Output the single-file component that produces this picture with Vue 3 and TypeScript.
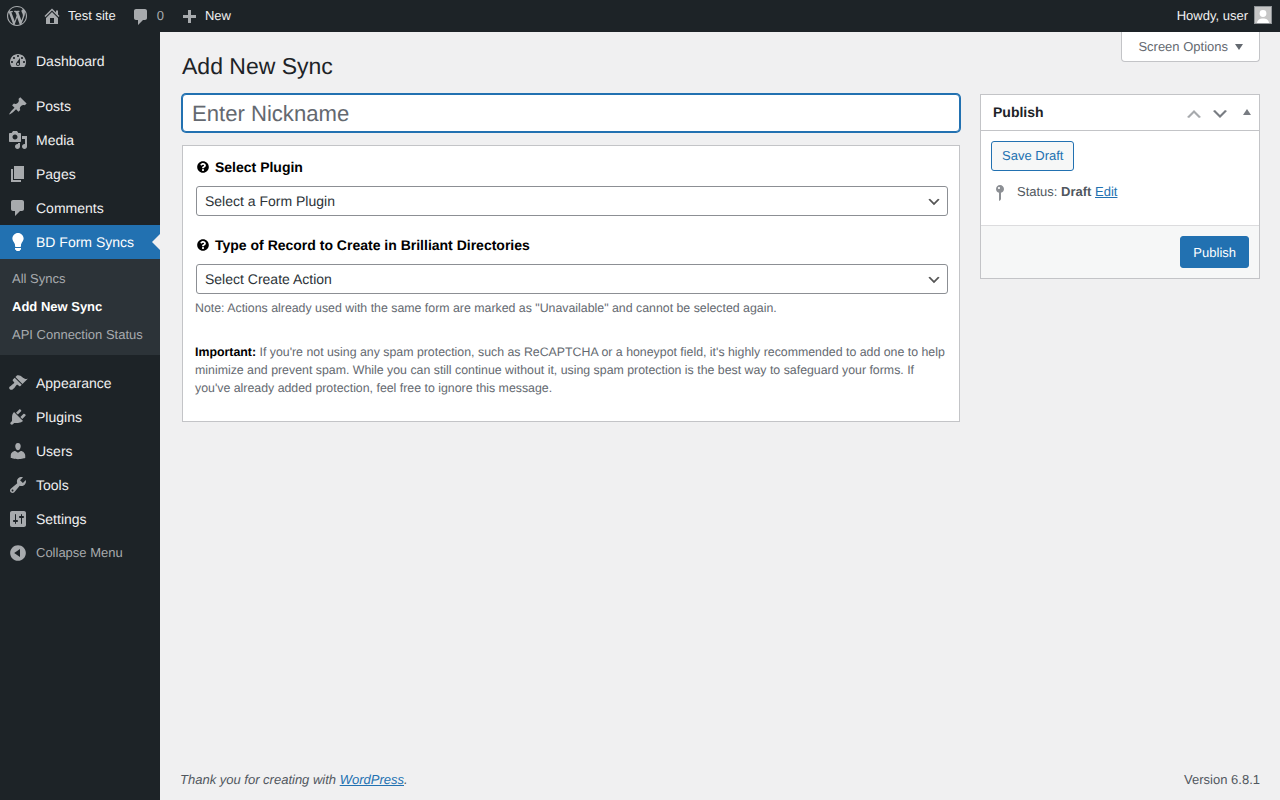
<template>
  <div class="shell">
    <header class="adminbar">
      <div class="bar-left">
        <svg class="wp-logo" viewBox="0 0 20 20"><path :d="icons.wp" /></svg>
        <a class="bar-item site"><svg viewBox="0 0 20 20"><path :d="icons.home" /></svg>Test site</a>
        <a class="bar-item comments"><svg viewBox="0 0 20 20"><path :d="icons.comments" /></svg><span>0</span></a>
        <a class="bar-item new"><svg viewBox="0 0 20 20"><path :d="icons.plus" /></svg>New</a>
      </div>
      <div class="howdy">
        Howdy, user
        <svg class="avatar" viewBox="0 0 18 18">
          <rect width="18" height="18" fill="#8f9396" />
          <rect x="1" y="1" width="16" height="16" fill="#c6c6c6" />
          <circle cx="9" cy="7.500" r="3.400" fill="#fff" />
          <path d="M3 17c.3-3.200 2.800-4.500 6-4.500s5.700 1.300 6 4.500z" fill="#fff" />
        </svg>
      </div>
    </header>

    <aside class="sidebar">
      <template v-for="group in menu" :key="group[0].label">
        <ul class="menu-group">
          <li v-for="item in group" :key="item.label">
            <a class="menu-item" :class="{ active: item.active }">
              <svg viewBox="0 0 20 20"><path :d="item.icon" /></svg>
              {{ item.label }}
            </a>
            <ul v-if="item.active" class="submenu">
              <li v-for="sub in submenu" :key="sub" :class="{ current: sub === 'Add New Sync' }">{{ sub }}</li>
            </ul>
          </li>
        </ul>
      </template>
      <a class="collapse"><svg viewBox="0 0 20 20"><path :d="icons.collapse" /></svg>Collapse Menu</a>
    </aside>

    <main class="content">
      <div class="head">
        <h1>Add New Sync</h1>
        <button class="screen-options">Screen Options <i class="caret"></i></button>
      </div>

      <div class="columns">
        <section class="main-col">
          <input class="nickname" type="text" placeholder="Enter Nickname" />
          <div class="box">
            <label class="field-label"><svg viewBox="0 0 512 512"><path :d="icons.help" /></svg>Select Plugin</label>
            <select class="field"><option>Select a Form Plugin</option></select>

            <label class="field-label second"><svg viewBox="0 0 512 512"><path :d="icons.help" /></svg>Type of Record to Create in Brilliant Directories</label>
            <select class="field"><option>Select Create Action</option></select>

            <p class="note">Note: Actions already used with the same form are marked as "Unavailable" and cannot be selected again.</p>
            <p class="important"><strong>Important:</strong> If you're not using any spam protection, such as ReCAPTCHA or a honeypot field, it's highly recommended to add one to help minimize and prevent spam. While you can still continue without it, using spam protection is the best way to safeguard your forms. If you've already added protection, feel free to ignore this message.</p>
          </div>
        </section>

        <section class="publish">
          <div class="publish-head">
            <h2>Publish</h2>
            <svg class="chev up" viewBox="0 0 20 20"><path d="M15 14l-5-5-5 5-2-1 7-7 7 7z" /></svg>
            <svg class="chev down" viewBox="0 0 20 20"><path d="M5 6l5 5 5-5 2 1-7 7-7-7z" /></svg>
            <i class="toggle"></i>
          </div>
          <div class="publish-body">
            <button class="save-draft">Save Draft</button>
            <div class="status">
              <svg viewBox="0 0 20 20"><path :d="icons.status" /></svg>
              <span>Status: <b>Draft</b> <a>Edit</a></span>
            </div>
          </div>
          <div class="publish-foot">
            <button class="publish-btn">Publish</button>
          </div>
        </section>
      </div>

      <footer class="footer">
        <em>Thank you for creating with <a>WordPress</a>.</em>
        <span>Version 6.8.1</span>
      </footer>
    </main>
  </div>
</template>

<script setup lang="ts">
interface MenuItem { label: string; icon: string; active?: boolean }

const icons = {
  wp: 'M20 10c0-5.510-4.490-10-10-10C4.480 0 0 4.490 0 10c0 5.520 4.480 10 10 10 5.510 0 10-4.480 10-10zM7.780 15.370L4.370 6.220c.55-.02 1.170-.08 1.170-.08.5-.06.44-1.130-.06-1.110 0 0-1.450.11-2.370.11-.18 0-.37 0-.58-.01C4.120 2.690 6.870 1.110 10 1.110c2.330 0 4.450.87 6.050 2.340-.68-.11-1.650.39-1.650 1.580 0 .74.45 1.360.9 2.100.35.61.55 1.360.55 2.460 0 1.490-1.400 5-1.400 5l-3.030-8.370c.54-.02.82-.17.82-.17.5-.05.44-1.250-.06-1.220 0 0-1.440.12-2.380.12-.87 0-2.330-.12-2.330-.12-.5-.03-.56 1.200-.06 1.220l.92.08 1.260 3.410zM17.410 10c.24-.64.74-1.870.43-4.250.7 1.290 1.050 2.710 1.050 4.250 0 3.290-1.730 6.240-4.400 7.780.97-2.590 1.940-5.200 2.920-7.780zM6.100 18.090C3.120 16.650 1.110 13.530 1.110 10c0-1.300.23-2.480.72-3.590C3.250 10.300 4.670 14.200 6.100 18.090zm4.030-6.630l2.580 6.980c-.86.29-1.760.45-2.710.45-.79 0-1.570-.11-2.290-.33.81-2.380 1.620-4.740 2.420-7.100z',
  home: 'M16 8.500l1.530 1.530-1.060 1.060L10 4.620l-6.470 6.470-1.060-1.060L10 2.500l4 4v-2h2v4zm-6-2.460l6 5.990V18H4v-5.970zM12 17v-5H8v5h4z',
  comments: 'M5 2h9c1.100 0 2 .9 2 2v7c0 1.100-.9 2-2 2h-2l-5 5v-5H5c-1.100 0-2-.9-2-2V4c0-1.100.9-2 2-2z',
  plus: 'M17 7v3h-5v5H9v-5H4V7h5V2h3v5h5z',
  collapse: 'M10 2.160c4.330 0 7.840 3.510 7.840 7.840s-3.510 7.840-7.840 7.840S2.160 14.330 2.160 10 5.710 2.160 10 2.160zm2 11.720V6.120L6.180 9.970z',
  status: 'M14 6c0 1.860-1.280 3.410-3 3.860V16c0 1-2 2-2 2V9.860c-1.720-.45-3-2-3-3.860 0-2.210 1.790-4 4-4s4 1.790 4 4zM8 5c0 .55.45 1 1 1s1-.45 1-1-.45-1-1-1-1 .45-1 1z',
  help: 'M504 256c0 136.997-111.043 248-248 248S8 392.997 8 256C8 119.083 119.043 8 256 8s248 111.083 248 248zM262.655 90c-54.497 0-89.255 22.957-116.549 63.758-3.536 5.286-2.353 12.415 2.715 16.258l34.699 26.310c5.205 3.947 12.621 3.008 16.665-2.122 17.864-22.658 30.113-35.797 57.303-35.797 20.429 0 45.698 13.148 45.698 32.958 0 14.976-12.363 22.667-32.534 33.976C247.128 238.528 216 254.941 216 296v4c0 6.627 5.373 12 12 12h56c6.627 0 12-5.373 12-12v-1.333c0-28.462 83.186-29.647 83.186-106.667 0-58.002-60.165-102-116.531-102zM256 338c-25.365 0-46 20.635-46 46 0 25.364 20.635 46 46 46s46-20.636 46-46c0-25.365-20.635-46-46-46z',
}

const menu: MenuItem[][] = [
  [{ label: 'Dashboard', icon: 'M3.760 16h12.480c1.100-1.370 1.760-3.110 1.760-5 0-4.420-3.580-8-8-8s-8 3.580-8 8c0 1.890.66 3.630 1.760 5zM10 4c.55 0 1 .45 1 1s-.45 1-1 1-1-.45-1-1 .45-1 1-1zM6 6c.55 0 1 .45 1 1s-.45 1-1 1-1-.45-1-1 .45-1 1-1zm8 0c.55 0 1 .45 1 1s-.45 1-1 1-1-.45-1-1 .45-1 1-1zm-5.370 5.550L12 7v6c0 1.100-.9 2-2 2s-2-.9-2-2c0-.57.24-1.080.63-1.450zM4 10c.55 0 1 .45 1 1s-.45 1-1 1-1-.45-1-1 .45-1 1-1zm12 0c.55 0 1 .45 1 1s-.45 1-1 1-1-.45-1-1 .45-1 1-1zm-5 3c0-.55-.45-1-1-1s-1 .45-1 1 .45 1 1 1 1-.45 1-1z' }],
  [
    { label: 'Posts', icon: 'M10.440 3.020l1.820-1.820 6.360 6.350-1.830 1.820c-1.050-.68-2.480-.57-3.410.36l-.75.75c-.92.93-1.040 2.350-.35 3.410l-1.830 1.820-2.410-2.410-2.800 2.790c-.42.42-3.380 2.710-3.800 2.290s1.860-3.390 2.280-3.810l2.790-2.790L4.100 9.360l1.830-1.820c1.050.69 2.480.57 3.400-.36l.75-.75c.93-.92 1.050-2.350.36-3.410z' },
    { label: 'Media', icon: 'M13 11V4c0-.55-.45-1-1-1h-1.670L9 1H5L3.670 3H2c-.55 0-1 .45-1 1v7c0 .55.45 1 1 1h10c.55 0 1-.45 1-1zM7 4.500c1.380 0 2.500 1.120 2.500 2.500S8.380 9.500 7 9.500 4.500 8.380 4.500 7 5.620 4.500 7 4.500zM14 6h5v10.500c0 1.380-1.120 2.500-2.500 2.500S14 17.880 14 16.500s1.120-2.500 2.500-2.500c.17 0 .34.02.5.05V9h-3V6zm-4 8.050V13h2v3.500c0 1.380-1.120 2.500-2.500 2.500S7 17.880 7 16.500 8.120 14 9.500 14c.17 0 .34.02.5.05z' },
    { label: 'Pages', icon: 'M6 15V2h10v13H6zm-1 1h8v2H3V5h2v11z' },
    { label: 'Comments', icon: icons.comments },
    { label: 'BD Form Syncs', active: true, icon: 'M10 1c3.110 0 5.630 2.520 5.630 5.620 0 1.840-2.030 4.580-2.030 4.580-.33.44-.6 1.250-.6 1.800v1c0 .55-.45 1-1 1H8c-.55 0-1-.45-1-1v-1c0-.55-.27-1.360-.6-1.800 0 0-2.020-2.740-2.020-4.580C4.380 3.520 6.890 1 10 1zM7 16.870V16h6v.87c0 .62-.13 1.130-.75 1.130H12c0 .62-.4 1-1.020 1h-2c-.61 0-.98-.38-.98-1h-.25c-.62 0-.75-.51-.75-1.130z' },
  ],
  [
    { label: 'Appearance', icon: 'M14.480 11.060L7.410 3.990l1.500-1.500c.5-.56 2.300-.47 3.510.32 1.210.8 1.430 1.280 2.910 2.100 1.180.64 2.450 1.260 4.450.85zm-.71.71L6.700 4.700 4.930 6.470c-.39.39-.39 1.020 0 1.410l1.060 1.060c.39.39.39 1.030 0 1.420-.6.6-1.430 1.110-2.210 1.690-.35.26-.7.53-1.010.84C1.430 13.230.4 14.750 1.800 16.150c1.410 1.410 2.920.38 4.250-.95.31-.31.58-.66.84-1.010.58-.78 1.090-1.610 1.690-2.210.39-.39 1.020-.39 1.410 0l1.060 1.060c.39.39 1.020.39 1.410 0z' },
    { label: 'Plugins', icon: 'M13.110 4.360L9.870 7.600 8 5.730l3.240-3.240c.35-.34 1.050-.2 1.560.32.52.51.66 1.210.31 1.550zm-8 1.770l.91-1.120 9.010 9.010-1.190.84c-.71.71-2.630 1.160-3.820 1.160H6.140L4.900 17.260c-.59.59-1.540.59-2.120 0-.59-.58-.59-1.530 0-2.120l1.240-1.240v-3.880c0-1.130.4-3.190 1.090-3.890zm7.260 3.970l3.240-3.240c.34-.35 1.040-.21 1.550.31.52.51.66 1.210.31 1.550l-3.240 3.250z' },
    { label: 'Users', icon: 'M10 9.250c-2.270 0-2.730-3.440-2.730-3.440C7 4.020 7.820 2 9.970 2c2.160 0 2.980 2.020 2.710 3.810 0 0-.41 3.440-2.680 3.440zm0 2.570L12.720 10c2.390 0 4.520 2.330 4.520 4.530v2.490s-3.650 1.130-7.240 1.130c-3.650 0-7.240-1.130-7.240-1.130v-2.490c0-2.250 1.940-4.480 4.470-4.480z' },
    { label: 'Tools', icon: 'M16.680 9.770c-1.340 1.340-3.300 1.670-4.950.99l-5.410 6.520c-.99.99-2.590.99-3.580 0s-.99-2.590 0-3.570l6.520-5.420c-.68-1.650-.35-3.610.99-4.950 1.280-1.280 3.120-1.620 4.720-1.060l-2.890 2.890 2.820 2.820 2.860-2.870c.53 1.580.18 3.390-1.080 4.670zM3.810 16.210c.4.39 1.040.39 1.430 0 .4-.4.4-1.040 0-1.430-.39-.4-1.030-.4-1.430 0-.39.39-.39 1.030 0 1.430z' },
    { label: 'Settings', icon: 'M18 16V4c0-1.100-.9-2-2-2H4c-1.100 0-2 .9-2 2v12c0 1.100.9 2 2 2h12c1.100 0 2-.9 2-2zM8 11h1c.55 0 1 .45 1 1s-.45 1-1 1H8v1.500c0 .28-.22.5-.5.5s-.5-.22-.5-.5V13H6c-.55 0-1-.45-1-1s.45-1 1-1h1V5.500c0-.28.22-.5.5-.5s.5.22.5.5V11zm5-2h-1c-.55 0-1-.45-1-1s.45-1 1-1h1V5.500c0-.28.22-.5.5-.5s.5.22.5.5V7h1c.55 0 1 .45 1 1s-.45 1-1 1h-1v5.500c0 .28-.22.5-.5.5s-.5-.22-.5-.5V9z' },
  ],
]

const submenu = ['All Syncs', 'Add New Sync', 'API Connection Status']
</script>

<style>
html, body { margin: 0; background: #f0f0f1; }
</style>

<style scoped>
.shell {
  display: grid;
  grid-template-columns: 160px 1fr;
  grid-template-rows: 32px 1fr;
  height: 800px;
  overflow: hidden;
  font-family: "Liberation Sans", Arial, sans-serif;
  font-size: 13px;
  color: #3c434a;
  text-rendering: geometricPrecision;
}

.adminbar {
  grid-column: 1 / 3;
  display: flex;
  justify-content: space-between;
  align-items: flex-start;
  background: #1d2327;
  color: #f0f0f1;
  line-height: 31px;
}
.bar-left { display: flex; align-items: flex-start; height: 32px; }
.adminbar svg { fill: #a7aaad; flex: none; }
.wp-logo { width: 20px; height: 20px; margin: 6px 0 0 7px; }
.bar-item { display: flex; align-items: flex-start; }
.bar-item svg { width: 20px; height: 20px; }
.site { margin-left: 15px; }
.site svg { margin: 6px 6px 0 0; }
.comments { margin-left: 15px; color: #a7aaad; }
.comments svg { margin: 7px 6px 0 0; }
.new { margin-left: 15px; }
.new svg { margin: 8px 6px 0 0; }
.howdy { display: flex; align-items: flex-start; gap: 6px; margin-right: 8px; }
.avatar { width: 18px; height: 18px; margin-top: 6px; }

.sidebar { background: #1d2327; padding-top: 12px; }
.sidebar ul { list-style: none; margin: 0; padding: 0; }
.menu-group { margin-bottom: 11px !important; }
.menu-item {
  position: relative;
  display: flex;
  align-items: center;
  height: 34px;
  padding-left: 8px;
  font-size: 14px;
  color: #f0f0f1;
}
.menu-item svg { width: 20px; height: 20px; margin-right: 8px; fill: #a7aaad; }
.menu-item.active { background: #2271b1; color: #fff; }
.menu-item.active svg { fill: #fff; }
.menu-item.active::after {
  content: "";
  position: absolute;
  right: 0;
  top: 9px;
  border: 8px solid transparent;
  border-left-width: 0;
  border-right-color: #f0f0f1;
}
.submenu { background: #2c3338; padding: 6px 0 !important; }
.submenu li { height: 28px; line-height: 28px; padding-left: 12px; color: #a8abaf; }
.submenu li.current { color: #fff; font-weight: 600; }
.collapse {
  display: flex;
  align-items: center;
  height: 34px;
  margin-top: -12px;
  padding-left: 8px;
  color: #a7aaad;
}
.collapse svg { width: 20px; height: 20px; margin: 1px 8px 0 0; fill: #a7aaad; }

.content { display: flex; flex-direction: column; padding: 0 20px 0 22px; }
.head { display: flex; justify-content: space-between; align-items: flex-start; height: 62px; }
h1 { margin: 0; padding-top: 20px; font-size: 23px; font-weight: 400; line-height: 29px; color: #1d2327; }
.screen-options {
  display: flex;
  align-items: center;
  gap: 7px;
  height: 30px;
  padding: 0 16px;
  font: inherit;
  color: #646970;
  background: #fff;
  border: 1px solid #c3c4c7;
  border-top: 0;
  border-radius: 0 0 4px 4px;
  text-rendering: inherit;
}
.caret { border: 4px solid transparent; border-bottom-width: 0; border-top: 6px solid #646970; margin-top: 1px; }

.columns { display: grid; grid-template-columns: 778px 280px; gap: 20px; align-items: start; }
.main-col { min-width: 0; }
.nickname {
  display: block;
  box-sizing: border-box;
  width: 100%;
  height: 38px;
  padding: 5px 9px 3px;
  font: 22.1px "Liberation Sans", Arial, sans-serif;
  color: #2c3338;
  background: #fff;
  border: 1px solid #2271b1;
  border-radius: 4px;
  box-shadow: 0 0 0 1px #2271b1;
  outline: none;
  text-rendering: inherit;
}
.nickname::placeholder { color: #646970; opacity: 1; }

.box {
  box-sizing: border-box;
  height: 277px;
  margin-top: 13px;
  padding: 12px 11px 0 12px;
  background: #fff;
  border: 1px solid #c3c4c7;
}
.field-label {
  display: flex;
  align-items: center;
  gap: 6px;
  height: 18px;
  margin-left: 2px;
  font-size: 14px;
  font-weight: 700;
  color: #000;
}
.field-label svg { width: 12px; height: 12px; fill: #000; }
.field-label.second { margin-top: 20px; }
.field {
  display: block;
  box-sizing: border-box;
  width: 752px;
  height: 30px;
  margin: 10px 0 0 1px;
  padding: 0 24px 0 8px;
  font: 14px "Liberation Sans", Arial, sans-serif;
  color: #2c3338;
  border: 1px solid #8c8f94;
  border-radius: 3px;
  appearance: none;
  text-rendering: inherit;
  background: #fff url("data:image/svg+xml,%3Csvg xmlns='http://www.w3.org/2000/svg' viewBox='0 0 20 20'%3E%3Cpath d='M5 6l5 5 5-5 2 1-7 7-7-7z' fill='%23555'/%3E%3C/svg%3E") no-repeat right 5px top 55% / 16px 16px;
}
.note { margin: 6px 0 0; font-size: 12.35px; line-height: 16px; color: #646970; }
.important { margin: 27px 0 0; font-size: 12.35px; line-height: 18px; color: #646970; }
.important strong { color: #000; }

.publish { background: #fff; border: 1px solid #c3c4c7; box-sizing: border-box; }
.publish-head {
  position: relative;
  display: flex;
  align-items: center;
  height: 35px;
  padding: 0 12px;
  border-bottom: 1px solid #c3c4c7;
}
.publish-head h2 { flex: 1; margin: 0; font-size: 14px; line-height: 1.4; color: #1d2327; }
.chev { width: 20px; height: 20px; margin-top: 2px; }
.chev.up { fill: #a7aaad; margin-right: 6px; }
.chev.down { fill: #787c82; margin-right: 17px; }
.toggle { position: absolute; right: 8px; top: 14px; border: 4px solid transparent; border-top-width: 0; border-bottom: 6px solid #787c82; }
.publish-body { height: 94px; padding: 10px; box-sizing: border-box; }
button { cursor: pointer; }
.save-draft {
  display: block;
  height: 30px;
  padding: 0 10px 2px;
  font: inherit;
  color: #2271b1;
  background: #f6f7f7;
  border: 1px solid #2271b1;
  border-radius: 3px;
  text-rendering: inherit;
}
.status { display: flex; align-items: flex-start; margin-top: 12px; line-height: 18px; color: #50575e; }
.status svg { width: 20px; height: 20px; margin: 0 7px 0 -1px; fill: #8c8f94; flex: none; }
.status a { color: #2271b1; text-decoration: underline; }
.publish-foot {
  display: flex;
  justify-content: flex-end;
  padding: 10px;
  background: #f6f7f7;
  border-top: 1px solid #dcdcde;
}
.publish-btn {
  height: 32px;
  padding: 0 12px;
  font: inherit;
  color: #fff;
  background: #2271b1;
  border: 1px solid #2271b1;
  border-radius: 3px;
  text-rendering: inherit;
}

.footer {
  display: flex;
  justify-content: space-between;
  margin: auto 0 0 -2px;
  padding-bottom: 11px;
  line-height: 18px;
  color: #50575e;
}
.footer a { color: #2271b1; text-decoration: underline; }
</style>
